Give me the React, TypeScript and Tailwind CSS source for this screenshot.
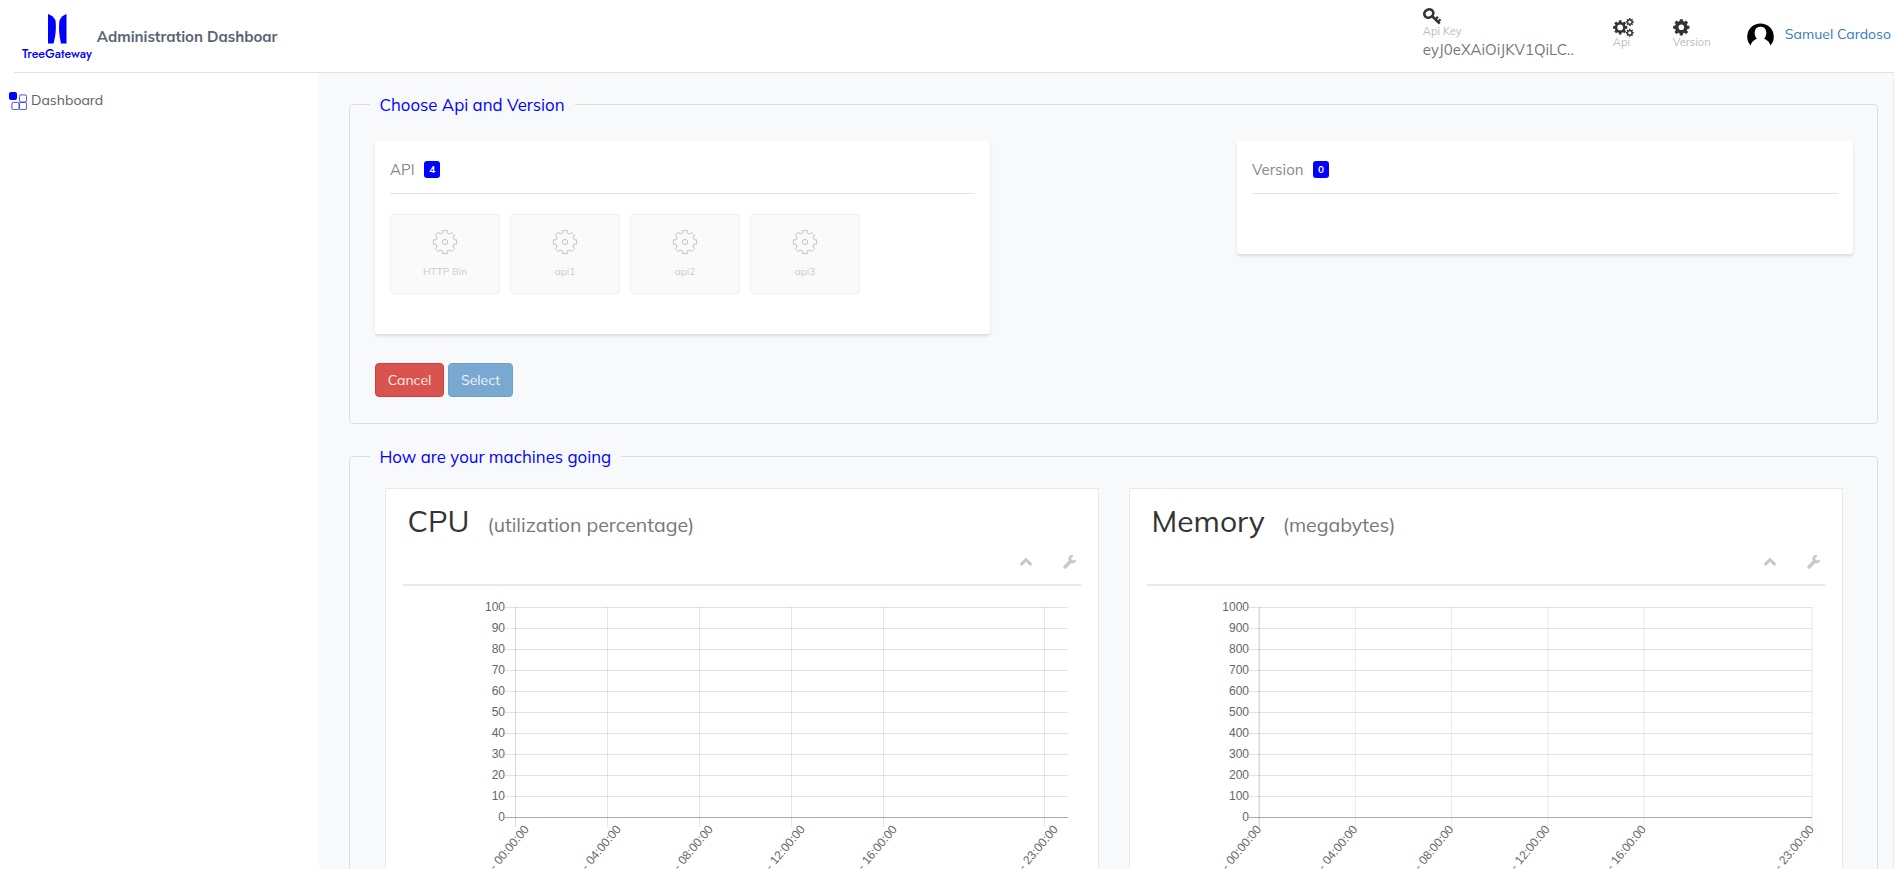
import type { ReactNode } from "react";

function gearPath(cx: number, cy: number, outer: number, inner: number, teeth: number, tip: number, root: number) {
  const points: string[] = [];
  for (let i = 0; i < teeth; i++) {
    const a = (i * 2 * Math.PI) / teeth - Math.PI / 2;
    const step: [number, number][] = [
      [inner, a - root],
      [outer, a - tip],
      [outer, a + tip],
      [inner, a + root],
    ];
    step.forEach(([r, t]) => points.push(`${(cx + r * Math.cos(t)).toFixed(2)} ${(cy + r * Math.sin(t)).toFixed(2)}`));
  }
  return `M${points.join("L")}Z`;
}

function holePath(cx: number, cy: number, r: number) {
  return `M${cx - r} ${cy}a${r} ${r} 0 1 0 ${2 * r} 0a${r} ${r} 0 1 0 ${-2 * r} 0Z`;
}

function Logo() {
  return (
    <div className="flex w-[70px] flex-col items-center">
      <svg width="20" height="30" viewBox="0 0 20 30" fill="#0000ff">
        <path d="M1 0C4 1 7 3 8.500 6.500C9.200 13 9 21 6.500 29.500H1Z" />
        <path d="M19.500 0C16.500 1 14 3 12.500 6.500C11.500 13 12 21 14 29.500H19.500Z" />
      </svg>
      <span className="mt-[2px] font-['Jost','Lato',sans-serif] text-[12.400px] leading-[17px] font-medium text-[#0000ff]">
        TreeGateway
      </span>
    </div>
  );
}

function KeyIcon() {
  return (
    <svg width="19" height="17" viewBox="0 0 19 17" fill="none" stroke="#333">
      <ellipse cx="5.800" cy="5.500" rx="4.600" ry="4" transform="rotate(-25 5.800 5.500)" strokeWidth="2.600" />
      <path d="M8.500 7.500L16.700 15.700" strokeWidth="2.600" />
      <path d="M12.300 11.500L15 8.800M15 13.800L17.500 11.300" strokeWidth="2.200" />
    </svg>
  );
}

function CogsIcon() {
  return (
    <svg width="22" height="19" viewBox="0 0 22 19" fill="#333" fillRule="evenodd">
      <path d={gearPath(7.2, 9.4, 7.2, 5.5, 8, 0.19, 0.25) + holePath(7.2, 9.4, 2.9)} />
      <path d={gearPath(16.8, 4, 4, 3, 8, 0.18, 0.26) + holePath(16.8, 4, 1.6)} />
      <path d={gearPath(16.8, 14.8, 4, 3, 8, 0.18, 0.26) + holePath(16.8, 14.8, 1.6)} />
    </svg>
  );
}

function CogIcon() {
  return (
    <svg width="17" height="17" viewBox="0 0 17 17" fill="#333" fillRule="evenodd">
      <path d={gearPath(8.3, 8.3, 8.3, 6.4, 8, 0.19, 0.25) + holePath(8.3, 8.3, 2.8)} />
    </svg>
  );
}

function Avatar() {
  return (
    <svg width="27" height="24" viewBox="0 0 27 24">
      <path
        fillRule="evenodd"
        d="M3.500 23.500A13.300 13.300 0 1 1 23.500 23.500C22.500 20 20 18 17 16.600C19 15 19.500 12.500 19.300 10C19 6.500 16.800 4.800 13.500 4.800C10.200 4.800 8 6.500 7.700 10C7.500 12.500 8 15 10 16.600C7 18 4.500 20 3.500 23.500Z"
      />
    </svg>
  );
}

function DashboardIcon() {
  return (
    <svg width="18" height="18" viewBox="0 0 18 18" fill="none" stroke="#3333ff" strokeWidth="0.900">
      <rect x="0" y="0" width="8" height="8" rx="2" fill="#0000ff" stroke="none" />
      <rect x="10.400" y="2.900" width="7.200" height="7.200" rx="1.500" />
      <rect x="2.900" y="10.400" width="7.200" height="7.200" rx="1.500" />
      <rect x="10.400" y="10.400" width="7.200" height="7.200" rx="1.500" />
    </svg>
  );
}

function OutlineGear() {
  return (
    <svg width="26" height="26" viewBox="0 0 26 26" fill="none" stroke="#c4c4c4" strokeLinejoin="round">
      <path d={gearPath(13, 13, 11.8, 9.3, 8, 0.19, 0.23)} />
      <circle cx="13" cy="13" r="2.700" />
    </svg>
  );
}

function ChevronUp() {
  return (
    <svg width="14" height="10" viewBox="0 0 14 10" fill="none" stroke="#c5c7cb" strokeWidth="3">
      <path d="M1.700 8L7 2.700L12.300 8" />
    </svg>
  );
}

function Wrench() {
  return (
    <svg width="14" height="14" viewBox="0 0 14 14" fill="none" stroke="#c5c7cb">
      <path d="M2 12L8 6" strokeWidth="3.200" strokeLinecap="round" />
      <path d="M12.200 5.300A2.900 2.900 0 1 1 9.800 1.200" strokeWidth="2.600" />
    </svg>
  );
}

function Panel({ title, children, className }: { title: string; children: ReactNode; className: string }) {
  return (
    <fieldset className={`min-w-0 rounded-[4px] border border-[#dcdde0] ${className}`}>
      <legend className="ml-5 h-[25px] pr-[10px] pl-[9.500px] text-[16.800px] leading-[25px] text-[#0000ff]">{title}</legend>
      {children}
    </fieldset>
  );
}

function ListCard({ title, count, children, className }: { title: string; count: number; children?: ReactNode; className: string }) {
  return (
    <div className={`rounded-[3px] bg-white px-[15px] shadow-[0_2px_3px_rgba(0,0,0,0.12)] ${className}`}>
      <div className="flex h-[53px] items-center border-b border-[#e4e4e4] pt-[5px]">
        <span className="pt-[2px] text-[15px] text-[#888]">{title}</span>
        <span className="ml-[9.500px] flex h-[17px] w-4 items-center justify-center rounded-[3px] bg-[#0000ff] text-[10px] font-bold text-white">
          {count}
        </span>
      </div>
      {children}
    </div>
  );
}

const apis = ["HTTP Bin", "api1", "api2", "api3"];
const hours = ["00", "04", "08", "12", "16", "23"];

function Chart({ axis, lines, right, offset, max, soft }: { axis: number; lines: number[]; right: number; offset: number; max: number; soft?: boolean }) {
  const left = axis - 10;
  return (
    <svg className="block" width="678" height="300" viewBox="0 0 678 300" fontFamily="'Liberation Sans', sans-serif" fontSize="12" fill="#666">
      {Array.from({ length: 11 }, (_, i) => (
        <g key={i}>
          <path d={`M${left} ${21.5 + 21 * i}H${right}`} stroke="#000" strokeOpacity={i === 10 ? 0.33 : 0.11} />
          <text x={left} y={25 + 21 * i} textAnchor="end">
            {(max / 10) * (10 - i)}
          </text>
        </g>
      ))}
      {lines.map((x, i) => (
        <g key={x}>
          <path d={`M${x} 21V241`} stroke="#000" strokeOpacity={i === 0 ? 0.15 : soft ? 0.08 : 0.1} strokeWidth={soft && i === 0 ? 1.5 : 1} />
          <text transform={`translate(${x + offset} 241) rotate(-50)`} y="4" textAnchor="end">
            {`- ${hours[i]}:00:00`}
          </text>
        </g>
      ))}
    </svg>
  );
}

function ChartCard({ title, unit, children }: { title: string; unit: string; children: ReactNode }) {
  return (
    <div className="h-[420px] w-[714px] border border-[#e6e9ed] bg-white px-[17px]">
      <div className="flex h-[97px] flex-col border-b-2 border-[#e6e9ed]">
        <h2 className="flex items-baseline gap-[18px] px-[4.500px] pt-[13px] leading-[38px]">
          <span className="text-[30px] text-[#333]">{title}</span>
          <span className="text-[19.500px] text-[#777]">{unit}</span>
        </h2>
        <div className="mt-[11px] mr-1 flex items-center justify-end gap-[30px]">
          <ChevronUp />
          <Wrench />
        </div>
      </div>
      {children}
    </div>
  );
}

export default function App() {
  return (
    <div className="flex h-screen flex-col overflow-hidden bg-white font-['Mulish','Nunito_Sans','Lato',sans-serif] text-[14px] text-[#5a6068]">
      <header className="ml-[14px] flex h-[73px] shrink-0 border-b border-[#e2e2e2]">
        <div className="flex w-[264px] shrink-0 overflow-hidden pt-[14px] pl-2">
          <Logo />
          <span className="ml-[5px] pt-[13px] text-[15px] leading-[20px] font-bold tracking-[-0.03px] whitespace-nowrap text-[#5a6474]">
            Administration Dashboard
          </span>
        </div>
        <div className="ml-auto flex pr-[3px]">
          <div className="w-[190px] pt-2">
            <KeyIcon />
            <div className="text-[11px] leading-[13px] text-[#bbb]">Api Key</div>
            <div className="mt-[2px] text-[15px] leading-5 text-[#777]">eyJ0eXAiOiJKV1QiLC..</div>
          </div>
          <div className="w-[60px] pt-[18px]">
            <CogsIcon />
            <div className="-mt-px text-[11px] leading-[13px] text-[#bbb]">Api</div>
          </div>
          <div className="w-[74px] pt-[19px]">
            <CogIcon />
            <div className="text-[11px] leading-[13px] text-[#bbb]">Version</div>
          </div>
          <div className="flex h-[68px] items-center gap-[11px]">
            <div className="-mt-px">
              <Avatar />
            </div>
            <span className="whitespace-nowrap text-[#337ab7]">Samuel Cardoso</span>
          </div>
        </div>
      </header>

      <div className="flex min-h-0 flex-1">
        <aside className="w-[319px] shrink-0 pt-[19px] pl-[9px]">
          <div className="flex items-center gap-1 leading-5">
            <DashboardIcon />
            <span className="-mt-[2px]">Dashboard</span>
          </div>
        </aside>

        <main className="min-w-0 flex-1 overflow-hidden border-r border-[#ededed] bg-[#f8f9fb] pt-[19px] pr-[15px] pl-[30px]">
          <Panel title="Choose Api and Version" className="h-[332px]">
            <div className="mt-6 flex items-start justify-between pr-6 pl-[25px]">
              <ListCard title="API" count={4} className="h-[193px] w-[615px]">
                <div className="mt-5 flex gap-[10px]">
                  {apis.map((name) => (
                    <div key={name} className="flex h-[80px] w-[110px] flex-col items-center rounded-[3px] border border-[#f1f1f1] bg-[#fafafa] pt-[14px]">
                      <OutlineGear />
                      <span className="mt-[10px] text-[10px] leading-[14px] text-[#ccc]">{name}</span>
                    </div>
                  ))}
                </div>
              </ListCard>
              <ListCard title="Version" count={0} className="h-[113px] w-[616px]" />
            </div>
            <div className="mt-[29px] flex gap-1 pl-[25px]">
              <button className="h-[34px] w-[69px] rounded-[4px] border border-[#d43f3a] bg-[#d9534f] text-[#fbeeed]">Cancel</button>
              <button className="h-[34px] w-[65px] rounded-[4px] border border-[#6d9fca] bg-[#79a8d1] text-[#eef4f9]">Select</button>
            </div>
          </Panel>

          <Panel title="How are your machines going" className="mt-5 h-[500px]">
            <div className="mt-[19px] flex gap-[30px] pl-[35px]">
              <ChartCard title="CPU" unit="(utilization percentage)">
                <Chart axis={112} lines={[112.5, 204.5, 296.5, 388.5, 480.5, 641.5]} right={665} offset={11} max={100} />
              </ChartCard>
              <ChartCard title="Memory" unit="(megabytes)">
                <Chart axis={112} lines={[112.2, 208.4, 304.6, 400.8, 497, 665]} right={665} offset={-0.5} max={1000} soft />
              </ChartCard>
            </div>
          </Panel>
        </main>
      </div>
    </div>
  );
}
